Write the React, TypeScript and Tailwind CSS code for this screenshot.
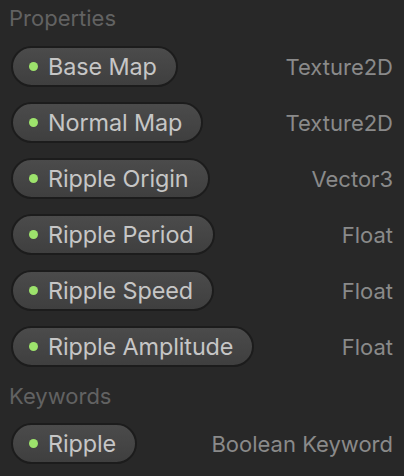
const properties = [
  { name: 'Base Map', type: 'Texture2D' },
  { name: 'Normal Map', type: 'Texture2D' },
  { name: 'Ripple Origin', type: 'Vector3' },
  { name: 'Ripple Period', type: 'Float' },
  { name: 'Ripple Speed', type: 'Float' },
  { name: 'Ripple Amplitude', type: 'Float' },
]

const keywords = [{ name: 'Ripple', type: 'Boolean Keyword' }]

function Row({ name, type }: { name: string; type: string }) {
  return (
    <div className="flex h-[41px] items-center justify-between">
      <div className="flex h-[41px] items-center gap-[10px] rounded-full border-2 border-[#1c1c1c] bg-gradient-to-b from-[#4b4b4b] to-[#3f3f3f] pl-[16px] pr-[19px]">
        <span className="h-[9px] w-[9px] rounded-full bg-[#9de36c]" />
        <span className="text-[23.4px] leading-none tracking-[-0.1px] text-[#c6c6c6]">{name}</span>
      </div>
      <span className="text-[22px] leading-none text-[#8a8a8a]">{type}</span>
    </div>
  )
}

export default function App() {
  return (
    <div
      className="h-[476px] w-[404px] overflow-hidden bg-[#282828] px-[11px] pt-[6px]"
      style={{ fontFamily: 'Inter, "Noto Sans", sans-serif' }}
    >
      <div className="-ml-[2px] h-[24px] text-[22px] leading-[24px] text-[#626262]">Properties</div>
      <div className="mt-[16px] flex flex-col gap-[15px]">
        {properties.map((p) => (
          <Row key={p.name} {...p} />
        ))}
      </div>
      <div className="-ml-[2px] mt-[17px] h-[24px] text-[22px] leading-[24px] text-[#626262]">Keywords</div>
      <div className="mt-[15px] flex flex-col gap-[15px]">
        {keywords.map((k) => (
          <Row key={k.name} {...k} />
        ))}
      </div>
    </div>
  )
}
